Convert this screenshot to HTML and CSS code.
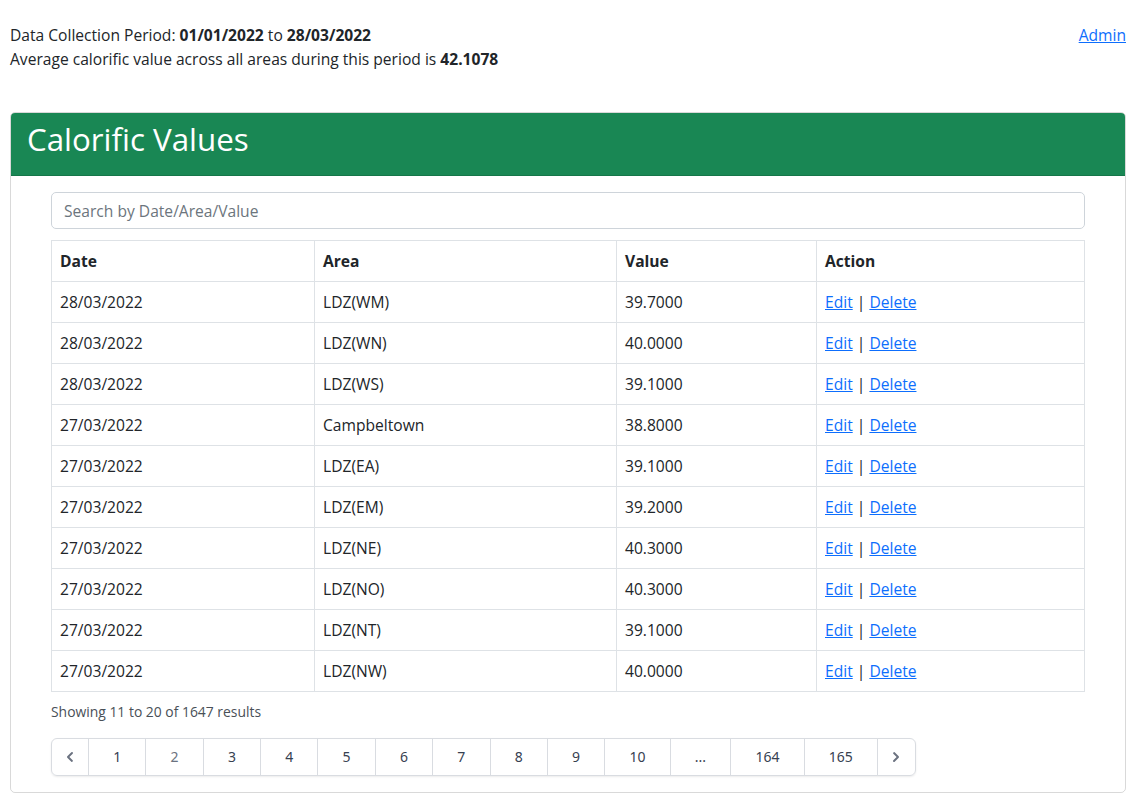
FILE: index.html
```html
<!DOCTYPE html>
<html lang="en">
<head>
<meta charset="utf-8">
<title>Calorific Values</title>
<link rel="stylesheet" href="styles.css">
</head>
<body>
<div class="page">
  <div class="top">
    <div class="summary">
      <div>Data Collection Period: <b>01/01/2022</b> to <b>28/03/2022</b></div>
      <div>Average calorific value across all areas during this period is <b>42.1078</b></div>
    </div>
    <a class="link" href="#">Admin</a>
  </div>

  <div class="card">
    <div class="card-header"><h2 class="title">Calorific Values</h2></div>
    <div class="card-body">
      <input class="search" type="text" placeholder="Search by Date/Area/Value">
      <table class="data">
        <colgroup><col class="c1"><col class="c2"><col class="c3"><col class="c4"></colgroup>
        <thead>
          <tr><th>Date</th><th>Area</th><th>Value</th><th>Action</th></tr>
        </thead>
        <tbody>
          <tr><td>28/03/2022</td><td>LDZ(WM)</td><td>39.7000</td><td><a class="link" href="#">Edit</a> | <a class="link" href="#">Delete</a></td></tr>
          <tr><td>28/03/2022</td><td>LDZ(WN)</td><td>40.0000</td><td><a class="link" href="#">Edit</a> | <a class="link" href="#">Delete</a></td></tr>
          <tr><td>28/03/2022</td><td>LDZ(WS)</td><td>39.1000</td><td><a class="link" href="#">Edit</a> | <a class="link" href="#">Delete</a></td></tr>
          <tr><td>27/03/2022</td><td>Campbeltown</td><td>38.8000</td><td><a class="link" href="#">Edit</a> | <a class="link" href="#">Delete</a></td></tr>
          <tr><td>27/03/2022</td><td>LDZ(EA)</td><td>39.1000</td><td><a class="link" href="#">Edit</a> | <a class="link" href="#">Delete</a></td></tr>
          <tr><td>27/03/2022</td><td>LDZ(EM)</td><td>39.2000</td><td><a class="link" href="#">Edit</a> | <a class="link" href="#">Delete</a></td></tr>
          <tr><td>27/03/2022</td><td>LDZ(NE)</td><td>40.3000</td><td><a class="link" href="#">Edit</a> | <a class="link" href="#">Delete</a></td></tr>
          <tr><td>27/03/2022</td><td>LDZ(NO)</td><td>40.3000</td><td><a class="link" href="#">Edit</a> | <a class="link" href="#">Delete</a></td></tr>
          <tr><td>27/03/2022</td><td>LDZ(NT)</td><td>39.1000</td><td><a class="link" href="#">Edit</a> | <a class="link" href="#">Delete</a></td></tr>
          <tr><td>27/03/2022</td><td>LDZ(NW)</td><td>40.0000</td><td><a class="link" href="#">Edit</a> | <a class="link" href="#">Delete</a></td></tr>
        </tbody>
      </table>
      <p class="showing">Showing 11 to 20 of 1647 results</p>
      <nav class="pager">
        <a class="pg arrow" href="#"><svg width="20" height="20" viewBox="0 0 20 20"><path fill="currentColor" d="M12.7 5.3a1 1 0 0 1 0 1.4L9.4 10l3.3 3.3a1 1 0 0 1-1.4 1.4l-4-4a1 1 0 0 1 0-1.4l4-4a1 1 0 0 1 1.4 0z"/></svg></a>
        <a class="pg" href="#">1</a>
        <span class="pg current">2</span>
        <a class="pg" href="#">3</a>
        <a class="pg" href="#">4</a>
        <a class="pg" href="#">5</a>
        <a class="pg" href="#">6</a>
        <a class="pg" href="#">7</a>
        <a class="pg" href="#">8</a>
        <a class="pg" href="#">9</a>
        <a class="pg" href="#">10</a>
        <span class="pg dots">...</span>
        <a class="pg" href="#">164</a>
        <a class="pg" href="#">165</a>
        <a class="pg arrow" href="#"><svg width="20" height="20" viewBox="0 0 20 20"><path fill="currentColor" d="M7.3 14.7a1 1 0 0 1 0-1.4L10.6 10 7.3 6.7a1 1 0 0 1 1.4-1.4l4 4a1 1 0 0 1 0 1.4l-4 4a1 1 0 0 1-1.4 0z"/></svg></a>
      </nav>
    </div>
  </div>
</div>
</body>
</html>
```

FILE: styles.css
```css
* { box-sizing: border-box; }

html, body {
  margin: 0;
  padding: 0;
  background: #ffffff;
}

body {
  font-family: "Open Sans", "Noto Sans", sans-serif;
  font-size: 15.6px;
  line-height: 24px;
  color: #212529;
}

.page {
  padding: 23px 8px 8px 10px;
}

.top {
  display: flex;
  justify-content: space-between;
  align-items: flex-start;
  margin-bottom: 41px;
}

.summary b { font-weight: 700; }

.link {
  color: #0d6efd;
  text-decoration: underline;
}

.card {
  border: 1px solid rgba(0, 0, 0, 0.15);
  border-radius: 5px;
  overflow: hidden;
  width: 1116px;
}

.card-header {
  background: #198754;
  padding: 7px 16px 17px;
  border-bottom: 1px solid rgba(0, 0, 0, 0.125);
}

.title {
  margin: 0;
  color: #ffffff;
  font-weight: 400;
  font-size: 31.3px;
  line-height: 38px;
}

.card-body {
  padding: 16px 40px 16px;
}

.search {
  display: block;
  width: 100%;
  height: 37px;
  padding: 6px 12px;
  font-family: inherit;
  font-size: 15.6px;
  color: #212529;
  border: 1px solid #ced4da;
  border-radius: 5px;
  margin-bottom: 11px;
}
.search::placeholder { color: #6c757d; }

.data {
  width: 100%;
  border-collapse: collapse;
}
.c1 { width: 263px; }
.c2 { width: 302px; }
.c3 { width: 200px; }

.data th, .data td {
  border: 1px solid #dee2e6;
  padding: 8px 8px;
  height: 41px;
  text-align: left;
  vertical-align: middle;
}
.data th { font-weight: 700; }

.showing {
  margin: 9px 0 16px;
  font-size: 13.9px;
  line-height: 21px;
  color: #495057;
}

.pager {
  display: inline-flex;
  border-radius: 6px;
  box-shadow: 0 1px 2px rgba(0, 0, 0, 0.08);
}

.pg {
  display: flex;
  align-items: center;
  justify-content: center;
  height: 38px;
  padding: 0 24.18px;
  margin-left: -1px;
  border: 1px solid #d9dce1;
  background: #ffffff;
  color: #374151;
  font-family: "Noto Sans", "Open Sans", sans-serif;
  font-size: 14px;
  text-decoration: none;
}
.pg:first-child { margin-left: 0; border-radius: 6px 0 0 6px; }
.pg:last-child { border-radius: 0 6px 6px 0; padding: 0 8.5px; }
.pg.current { color: #6b7280; }
.pg.dots { color: #374151; padding: 0 24.18px; }
.pg.arrow { color: #6b7280; }
.pg.arrow:first-child { padding: 0 8px; }
```
